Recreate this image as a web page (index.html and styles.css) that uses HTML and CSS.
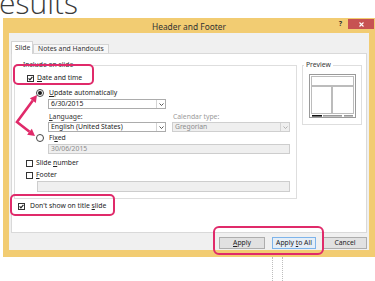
FILE: index.html
```html
<!DOCTYPE html>
<html>
<head>
<meta charset="utf-8">
<link rel="stylesheet" href="styles.css">
</head>
<body>
<div class="bg-title">esults</div>
<div class="dialog">
  <div class="titlebar">
    <span></span>
    <span class="title">Header and Footer</span>
    <span class="controls">
      <span class="help">?</span>
      <span class="close"><svg width="5" height="5" viewBox="0 0 5 5"><path d="M0.5 0.5L4.5 4.5M4.5 0.5L0.5 4.5" stroke="#fff" stroke-width="1.1"/></svg></span>
    </span>
  </div>
  <div class="client">
    <div class="tabs">
      <div class="tab active">Slide</div>
      <div class="tab">Notes and Handouts</div>
    </div>
    <div class="panel">
      <div class="cols">
        <fieldset class="group include">
          <legend>Include on slide</legend>
          <div class="row r-date"><span class="cb"><svg width="5" height="5" viewBox="0 0 5 5"><path d="M0.6 2.4L1.9 3.8L4.4 0.8" fill="none" stroke="#222" stroke-width="1.2"/></svg></span><span><u>D</u>ate and time</span></div>
          <div class="row r-auto"><span class="radio on"></span><span><u>U</u>pdate automatically</span></div>
          <div class="combo c-date"><span>6/30/2015</span><span class="arrow"><svg width="5" height="3" viewBox="0 0 5 3"><path d="M0.5 0.5L2.5 2.5L4.5 0.5" fill="none" stroke="#444" stroke-width="0.9"/></svg></span></div>
          <div class="pair labels"><span class="lbl"><u>L</u>anguage:</span><span class="lbl dis">Calendar type:</span></div>
          <div class="pair combos">
            <div class="combo"><span>English (United States)</span><span class="arrow"><svg width="5" height="3" viewBox="0 0 5 3"><path d="M0.5 0.5L2.5 2.5L4.5 0.5" fill="none" stroke="#444" stroke-width="0.9"/></svg></span></div>
            <div class="combo dis"><span>Gregorian</span><span class="arrow"><svg width="5" height="3" viewBox="0 0 5 3"><path d="M0.5 0.5L2.5 2.5L4.5 0.5" fill="none" stroke="#aaa" stroke-width="0.9"/></svg></span></div>
          </div>
          <div class="row r-fixed"><span class="radio"></span><span>Fi<u>x</u>ed</span></div>
          <div class="field f-fixed">30/06/2015</div>
          <div class="row r-num"><span class="cb"></span><span>Slide <u>n</u>umber</span></div>
          <div class="row r-foot"><span class="cb"></span><span><u>F</u>ooter</span></div>
          <div class="field f-foot"></div>
        </fieldset>
        <fieldset class="group preview">
          <legend>Preview</legend>
          <svg class="thumb" width="47" height="44" viewBox="0 0 47 44">
            <rect x="0.5" y="0.5" width="46" height="43" fill="#fff" stroke="#9a9a9a"/>
            <g fill="none" stroke="#555" stroke-width="0.8" stroke-dasharray="1 1">
              <rect x="2.5" y="2.5" width="42" height="9"/>
              <rect x="2.5" y="12.5" width="20" height="27"/>
              <rect x="23.5" y="12.5" width="21" height="27"/>
            </g>
            <rect x="3" y="41" width="10" height="1.6" fill="#111"/>
            <rect x="14" y="41" width="19" height="1.6" fill="#999"/>
            <rect x="35" y="41" width="9" height="1.6" fill="#999"/>
          </svg>
        </fieldset>
      </div>
      <div class="row r-dont"><span class="cb"><svg width="5" height="5" viewBox="0 0 5 5"><path d="M0.6 2.4L1.9 3.8L4.4 0.8" fill="none" stroke="#222" stroke-width="1.2"/></svg></span><span>Don't show on title <u>s</u>lide</span></div>
    </div>
    <div class="buttons">
      <button class="btn b-apply"><u>A</u>pply</button>
      <button class="btn b-all">Apply <u>t</u>o All</button>
      <button class="btn b-cancel">Cancel</button>
    </div>
  </div>
</div>
<div class="below"></div>
<svg class="annot" width="375" height="281" viewBox="0 0 375 281">
  <g fill="none" stroke="#e02a6a" stroke-width="2">
    <rect x="14" y="65" width="79" height="19" rx="4"/>
    <rect x="11" y="195" width="103" height="20" rx="4"/>
    <rect x="214" y="227" width="109" height="27" rx="5"/>
    <polyline points="32.8,100.6 17,122 29.5,131.7" stroke-width="2.6" stroke-linejoin="miter"/>
  </g>
  <g fill="#e02a6a">
    <polygon points="37,95 35.8,102.9 29.8,98.3"/>
    <polygon points="35,136 27.1,134.7 31.8,128.7"/>
  </g>
</svg>
</body>
</html>
```
FILE: styles.css
```css
* { box-sizing: border-box; }
html, body { margin: 0; }
body {
  width: 375px;
  height: 281px;
  overflow: hidden;
  position: relative;
  background: #fff;
  font-family: "Noto Sans", "DejaVu Sans", sans-serif;
  color: #222;
}
u { text-decoration-thickness: 0.5px; text-underline-offset: 1px; }

.bg-title {
  height: 18px;
  font-family: "Open Sans", sans-serif;
  font-weight: 300;
  font-size: 30px;
  line-height: 5px;
  color: #3a3a3a;
  margin-left: -1px;
  white-space: nowrap;
}

.dialog {
  margin-left: 3px;
  width: 372px;
  height: 239px;
  background: #f2cc72;
  display: flex;
  flex-direction: column;
}
.titlebar {
  height: 15px;
  display: grid;
  grid-template-columns: 1fr auto 1fr;
  align-items: start;
}
.title {
  font-size: 8.4px;
  line-height: 10px;
  padding-top: 4px;
  color: #333;
  white-space: nowrap;
}
.controls { justify-self: end; display: flex; align-items: flex-start; }
.help {
  font-size: 7px;
  font-weight: bold;
  line-height: 8px;
  margin-top: 2px;
  margin-right: 6px;
  color: #333;
}
.close {
  width: 26px;
  height: 10px;
  margin-top: 1px;
  margin-right: 1px;
  background: #c75252;
  display: flex;
  align-items: center;
  justify-content: center;
}

.client {
  margin: 0 6px 7px;
  flex: 1;
  background: #f0f0f0;
  padding: 8px 2px 0;
  font-size: 6.8px;
}
.tabs {
  display: flex;
  align-items: flex-end;
  height: 12px;
  padding-left: 0;
}
.tab {
  height: 9px;
  line-height: 8px;
  padding: 0 4px;
  border: 1px solid #d4d4d4;
  border-bottom: 0;
  background: #f7f7f7;
  color: #333;
  white-space: nowrap;
}
.tab.active {
  height: 13px;
  margin-bottom: -1px;
  background: #fff;
  position: relative;
  z-index: 1;
  line-height: 11px;
  width: 22px;
  padding: 0 3px;
}
.panel {
  height: 180px;
  border: 1px solid #d9d9d9;
  background: #fff;
  padding: 7px 0 0 2px;
}
.cols { display: flex; gap: 5px; align-items: flex-start; }

.group {
  margin: 0;
  padding: 0;
  border: 1px solid #dedede;
  min-width: 0;
}
.group legend {
  padding: 0 2px;
  font-size: 6.8px;
  line-height: 8px;
  color: #333;
}
.group.include { width: 283px; padding: 5px 0 6px 0; }
.group.include legend { margin-left: 6px; }
.group.preview { width: 60px; padding: 5px 0 6px 0; }
.group.preview legend { margin-left: 1px; }
.thumb { display: block; margin-left: 6px; }

.row {
  display: flex;
  align-items: center;
  height: 8px;
  line-height: 8px;
  white-space: nowrap;
}
.cb {
  width: 7px;
  height: 7px;
  border: 1px solid #333;
  background: #fff;
  margin-right: 3px;
  display: flex;
  align-items: center;
  justify-content: center;
  flex: none;
}
.radio {
  width: 8px;
  height: 8px;
  border: 1px solid #444;
  border-radius: 50%;
  background: #fff;
  margin-right: 5px;
  display: flex;
  align-items: center;
  justify-content: center;
  flex: none;
}
.radio.on::after {
  content: "";
  width: 4px;
  height: 4px;
  border-radius: 50%;
  background: #1a1a1a;
}
.r-date { margin-left: 12px; }
.r-auto { margin-top: 7px; margin-left: 21px; }
.combo {
  width: 118px;
  height: 10px;
  border: 1px solid #acacac;
  background: #fff;
  display: flex;
  align-items: center;
  justify-content: space-between;
  padding-left: 2px;
  line-height: 8px;
  white-space: nowrap;
  color: #222;
}
.combo.dis { background: #efefef; border-color: #cfcfcf; color: #8c8c8c; }
.arrow {
  width: 9px;
  height: 8px;
  border-left: 1px solid #d4d4d4;
  display: flex;
  align-items: center;
  justify-content: center;
}
.c-date { margin-top: 2px; margin-left: 33px; }
.pair { display: flex; gap: 6px; margin-left: 33px; }
.labels { margin-top: 4px; height: 8px; line-height: 8px; }
.lbl { width: 118px; padding-left: 1px; color: #333; }
.lbl.dis { color: #9a9a9a; }
.combos { margin-top: 1px; }
.r-fixed { margin-top: 2px; margin-left: 21px; }
.field {
  height: 10px;
  border: 1px solid #cdcdcd;
  background: #efefef;
  color: #8c8c8c;
  padding-left: 2px;
  line-height: 8px;
}
.f-fixed { margin-top: 2px; margin-left: 33px; width: 242px; }
.r-num { margin-top: 5px; margin-left: 11px; }
.r-foot { margin-top: 4px; margin-left: 11px; }
.f-foot { margin-top: 2px; margin-left: 22px; width: 253px; height: 11px; }
.r-dont { margin-top: 3px; margin-left: 4px; }
.r-dont .cb { margin-right: 5px; }

.buttons {
  display: flex;
  justify-content: flex-end;
  gap: 7px;
  margin-top: 4px;
}
.btn {
  height: 12px;
  width: 44px;
  border: 1px solid #adadad;
  background: #e1e1e1;
  font-family: "Noto Sans", "DejaVu Sans", sans-serif;
  font-size: 6.8px;
  line-height: 10px;
  color: #222;
  padding: 0;
  white-space: nowrap;
}
.b-apply { width: 46px; }
.b-all { border-color: #7eb4ea; background: #e5eef7; }

.below {
  margin-left: 272px;
  width: 11px;
  height: 24px;
  border-left: 1px dotted #bdbdbd;
  border-right: 1px dotted #bdbdbd;
}

.annot { position: absolute; top: 0; left: 0; pointer-events: none; }
```
